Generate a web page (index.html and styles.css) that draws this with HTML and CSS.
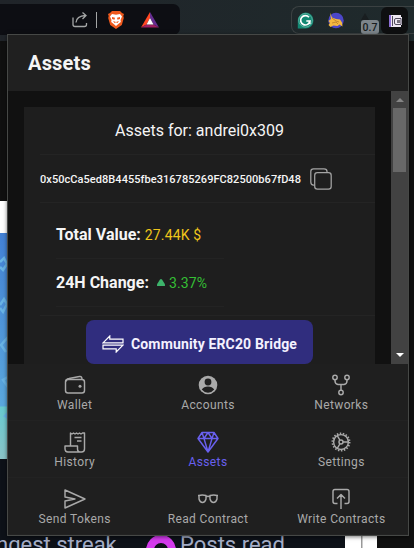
FILE: index.html
```html
<!DOCTYPE html>
<html lang="en">
<head>
<meta charset="utf-8">
<title>Assets</title>
<link rel="stylesheet" href="styles.css">
</head>
<body>
<div class="desktop">
  <header class="toolbar">
    <div class="address">
      <svg class="share" width="18" height="18" viewBox="0 0 18 18" fill="none" stroke="#a4a6a6" stroke-width="1.3"><path d="M2 6.500V13.500Q2 15.500 4 15.500H13.500Q15.500 15.500 15.500 13.500V12M5 11.500Q5.500 5 14.500 4.500M11.500 1.500L15 4.500L11.500 8"/></svg>
      <span class="divider"></span>
      <svg class="brave" width="18" height="20" viewBox="0 0 18 20"><path fill="#ee591d" d="M5 1h8l2 2 2 1-.7 2 .5 2-2 7L9 19l-5.800-4L1.200 8l.5-2L1 4l2-1z"/><path fill="#fff" d="M5 4l4 .7L13 4l2 2.500-1.500 3.500.3 2-2.500 2L9 16l-2.300-2-2.500-2 .3-2L3 6.500z"/><path fill="#ee591d" d="M5 7l3 .8-.5 2L5 9zM13 7l-3 .8.5 2L13 9zM6 11l3 1 3-1-1.500 2-1.500-.7-1.500.7z"/></svg>
      <svg class="bat" width="18" height="16" viewBox="0 0 18 16"><path fill="#ff4724" d="M9 0L0 15.500l5.500-3L9 6z"/><path fill="#662d91" d="M9 0l9 15.500-5.500-3L9 6z"/><path fill="#9e1f63" d="M0 15.500h18l-5.500-3h-7z"/><path fill="#fff" d="M9 6l3.500 6.500h-7z"/></svg>
    </div>
    <div class="extensions">
      <svg class="grammar" width="17" height="17" viewBox="0 0 17 17"><path fill="#128873" d="M8.500.5a8 8 0 1 1 0 16H.8V8.500A8 8 0 0 1 8.500.5z"/><circle cx="8.500" cy="8.300" r="6.800" fill="none" stroke="#8ec8bb" stroke-width=".6"/><path d="M12 5.300A4.700 4.700 0 1 0 13 9H9.300M12.800 9v3" fill="none" stroke="#fff" stroke-width="1.700"/></svg>
      <svg class="fox" width="18" height="17" viewBox="0 0 18 17"><circle cx="9" cy="8.500" r="7.700" fill="#4c46c9"/><path fill="#f4b840" d="M3 .5l2 5 4 1.500 4 .5 2 3 .5 4-3-2-2 1.500-4-.5-3 1.500-2-2 1.500-2-1.500-2 2.500-2z"/><path d="M5 6l4 3 3 1M5 11l4-1 2 2" fill="none" stroke="#af742b" stroke-width=".7"/></svg>
      <span class="gas"><i></i><b>0.7</b></span>
      <span class="active-extension"><svg width="15" height="14" viewBox="0 0 15 14"><path fill="#eee8f2" d="M1 1h12v2h1v8h-1v2H1z"/><path fill="#8c70d4" d="M1 1h2v12H1z"/><path d="M4.500 2v10M13 4.500H8q-1.500 0-1.500 1.500v3q0 1.500 1.500 1.500h5z" fill="none" stroke="#504a5c"/><path d="M9 6h3v3H9z" fill="#77717d"/></svg></span>
    </div>
  </header>
  <div class="banner">
    <svg width="8" height="226" viewBox="0 0 8 226" fill="none" stroke="#69b4e6" stroke-width="2.500"><path d="M0 29l4-4 3 6-4 6-3-3M0 72l4-6 3 5-4 8-3-4M8 104l-7 8 5 7M8 144l-5 3 5 7M8 180l-3 3 3 2"/></svg>
  </div>
  <div class="page-footer"><span class="streak">ngest streak</span><i class="ring"></i><span class="posts">Posts read</span><i class="white-strip"></i></div>

  <main class="popup">
    <h1>Assets</h1>
    <div class="viewport">
      <section class="card">
        <h2>Assets for: andrei0x309</h2>
        <div class="account"><span>0x50cCa5ed8B4455fbe316785269FC82500b67fD48</span>
          <svg width="22" height="22" viewBox="0 0 22 22" fill="none" stroke="#a4a4a4" stroke-width="1.250"><rect x="4.700" y="4.700" width="16.500" height="16.500" rx="2.700"/><path d="M4.700 17H3.500Q.8 17 .8 14V3.500Q.8.800 3.500.8H14Q17 .8 17 3.500v1.200"/></svg>
        </div>
        <div class="stats">
          <div class="stat"><b>Total Value:</b><span class="value">27.44K $</span></div>
          <div class="stat"><b>24H Change:</b><svg width="8" height="7" viewBox="0 0 8 7"><path fill="#3db36b" d="M3 .6q1-1.200 2 0l3 4.600Q8.500 7 7.400 7H.6Q-.5 7 0 5.200z"/></svg><span class="gain">3.37%</span></div>
        </div>
        <div class="bridge-row"><button><svg width="22" height="18" viewBox="0 0 22 18" fill="none" stroke="#fff" stroke-width="1.200"><path d="M1 7.800L7.800 1v3.200H21v3.600zM21 10.200L14.200 17v-3.200H1v-3.600z"/></svg><span>Community ERC20 Bridge</span></button></div>
      </section>
      <div class="scrollbar"><i class="up"></i><i class="thumb"></i><i class="down"></i></div>
    </div>
    <nav>
      <a><svg viewBox="0 0 22 22"><rect x="1.500" y="5.500" width="19" height="13.500" rx="2.500"/><path d="M2 7.500Q2 5 5 4.500L15.500 2.500Q18 2 18 5.500"/><circle class="solid" cx="16" cy="12.200" r="1.500"/></svg><span>Wallet</span></a>
      <a><svg viewBox="0 0 22 22"><circle class="solid" cx="11" cy="11" r="9.300"/><circle class="cut" cx="11" cy="8" r="3.400"/><path class="cut" d="M4.800 15.500q2-3 6.200-3t6.200 3Q14.500 18.800 11 18.800t-6.200-3.300z"/></svg><span>Accounts</span></a>
      <a><svg viewBox="0 0 22 22"><circle cx="5" cy="3.500" r="2.200"/><circle cx="17" cy="3.500" r="2.200"/><circle cx="11" cy="18.500" r="2.200"/><path d="M5 6v1Q5 10 8 10.500H14q3-.5 3-3.500V6M11 10.500v6"/></svg><span>Networks</span></a>
      <a><svg viewBox="0 0 22 22"><path d="M6.500 15V2l1.500 1L9.500 2l1.500 1L12.500 2 14 3l1.500-1L17 3l1.500-1L20.500 2v16q0 3-3 3H4q-3 0-3-3.500V15h12.500v3q0 3 3.500 3M10.500 6.500h7M13 10h4.500"/></svg><span>History</span></a>
      <a class="selected"><svg viewBox="0 0 22 22"><path d="M5 1.500h12l4 6L11 21 1 7.500zM1 7.500h20M5 1.500l2 6 4-6 4 6 2-6M7 7.500L11 21l4-13.500"/></svg><span>Assets</span></a>
      <a><svg viewBox="0 0 22 22"><circle cx="11" cy="11" r="7.400"/><circle class="teeth" cx="11" cy="11" r="8.600"/><circle cx="11" cy="11" r="2"/><path d="M13 11h5M9.800 9L7.300 4.600M9.800 13l-2.500 4.400"/></svg><span>Settings</span></a>
      <a><svg viewBox="0 0 22 22"><path d="M1 2l20 9-20 9V13l10-2L1 9z"/></svg><span>Send Tokens</span></a>
      <a><svg viewBox="0 0 22 22"><path d="M1 7.500h1m18 0h1M2 7.500q3-1 7 0v3.500q-1 3.500-3.500 3.500T2 11zM13 7.500q4-1 7 0v3.500q-1 3.500-3.500 3.500T13 11zM9 9q2-1.500 4 0"/></svg><span>Read Contract</span></a>
      <a><svg viewBox="0 0 22 22"><path d="M7.500 15.500H5q-2 0-2-2V3.500q0-2 2-2h12q2 0 2 2v10q0 2-2 2h-2.500M11 21V7M7 10.500L11 6.500l4 4"/></svg><span>Write Contracts</span></a>
    </nav>
  </main>
</div>
</body>
</html>
```
FILE: styles.css
```css
* { box-sizing: border-box; }
body { margin: 0; font-family: Roboto, sans-serif; color: #f5f5f5; background: #101010; overflow: hidden; }
svg { display: block; flex: none; }
.desktop { position: relative; width: 414px; height: 548px; overflow: hidden; }
.toolbar { height: 41px; background: linear-gradient(90deg, #202429, #1f2a2c); display: flex; justify-content: space-between; }
.address { width: 180px; height: 31px; margin-top: 4px; background: #0d0e13; border-radius: 0 7px 7px 0; display: flex; align-items: center; padding: 0 0 0 71px; }
.divider { width: 1px; height: 16px; margin: 0 10px 0 7px; background: #a4a6a6; }
.bat { margin-left: 16px; }
.extensions { width: 123px; height: 28px; margin-top: 6px; border: 1px solid #3b4142; border-right: 0; border-radius: 8px 0 0 8px; display: flex; padding: 5px 0 0 5px; }
.fox { margin-left: 13px; }
.gas { flex: none; margin: 1px 2px 0 12px; width: 22px; display: flex; flex-direction: column; align-items: flex-end; }
.gas i { align-self: flex-start; margin-left: 4px; border: 4px solid transparent; border-top: 0; border-bottom: 7px solid #191e20; }
.gas b { width: 18px; height: 14px; border-radius: 3px; background: #7d858b; color: #171d21; font: 500 10.500px/15px Roboto; text-align: center; }
.active-extension { flex: none; width: 27px; height: 27px; margin-top: -5px; border-radius: 6px; background: #0e0f10; display: grid; place-items: center; }
.active-extension svg { margin-left: 2px; }
.banner { position: absolute; left: 0; top: 201px; width: 8px; height: 258px; padding-top: 32px; background: linear-gradient(#fff 0 32px, #4381d5 32px, #5ba8de 205px, #68cbd0 206px, #8bc4c8 258px); }
.page-footer { position: absolute; left: 0; top: 459px; width: 377px; height: 89px; background: #0d1118; display: flex; align-items: flex-start; padding-top: 72px; color: #a4adc7; font-size: 22px; line-height: 28px; white-space: nowrap; }
.streak { flex: none; width: 150px; margin-left: -4px; }
.ring { flex: none; width: 30px; height: 30px; margin-top: 4px; border: 8px solid #d43bed; border-radius: 50%; }
.posts { width: 169px; padding-left: 4px; flex: none; }
.white-strip { width: 32px; height: 20px; flex: none; background: linear-gradient(90deg, #fff 0 16px, #999 16px 17px, #fff 18px); }
.popup { position: absolute; left: 7px; top: 34px; width: 402px; height: 502px; border: 1px solid #464846; background: #111; box-shadow: 0 1px 4px #0008; }
h1 { height: 56px; margin: 0; padding-left: 20px; background: #202020; font: 700 20px/56px Roboto; letter-spacing: .2px; }
.viewport { height: 273px; display: flex; justify-content: space-between; padding-left: 16px; overflow: hidden; }
.card { width: 351px; height: 257px; margin-top: 16px; background: #1e1e1e; }
h2 { margin: 0 0 0 16px; height: 48px; border-bottom: 1px solid #242424; padding-right: 16px; text-align: center; font: 400 16px/47px Roboto; }
.account { height: 48px; margin-left: 16px; display: flex; align-items: center; gap: 9px; border-bottom: 1px solid #242424; font-size: 11px; font-weight: 500; letter-spacing: .055px; }
.account span { padding-top: 2px; }
.account svg { margin-top: 1px; }
.stats { height: 113px; margin-left: 16px; padding: 8px 0 0 16px; border-bottom: 1px solid #242424; }
.stat { width: 168px; height: 48px; display: flex; align-items: center; border-bottom: 1px solid #232323; font-size: 16px; }
.stat b { margin-right: 4px; }
.stat svg { margin: 0 4px; }
.value, .gain { font-size: 14px; letter-spacing: .15px; color: #efc51b; padding-top: 1px; }
.gain { color: #35bf35; }
.bridge-row { display: flex; justify-content: center; padding-top: 4px; }
button { width: 227px; height: 44px; border: 0; border-radius: 8px; color: #f4f1ff; background: #302d7e; font: 700 14px Roboto; display: flex; align-items: center; padding: 3px 0 0 16px; gap: 7px; letter-spacing: .15px; white-space: nowrap; }
.scrollbar { width: 17px; background: #424242; display: flex; flex-direction: column; align-items: center; padding-top: 7px; }
.up, .down { border: 4px solid transparent; border-top: 0; border-bottom: 4px solid #858585; }
.thumb { width: 13px; height: 64px; margin-top: 6px; background: #686868; }
.down { margin-top: auto; margin-bottom: 7px; border-top: 4px solid #fff; border-bottom: 0; }
nav { height: 171px; display: grid; grid-template: repeat(3, 57px) / repeat(3, 1fr); background: #1f1f1f; }
nav a { display: flex; flex-direction: column; align-items: center; padding-top: 10px; border-bottom: 1px solid #222; color: #a9a9a9; }
nav svg { width: 22px; height: 22px; fill: none; stroke: currentColor; stroke-width: 1.450; stroke-linejoin: round; }
nav .solid { fill: currentColor; stroke: none; }
nav .cut { fill: #1f1f1f; stroke: none; }
nav .teeth { stroke-width: 1.800; stroke-dasharray: 1.500 1.502; }
nav span { margin-top: 2px; font-size: 12px; line-height: 14px; letter-spacing: .37px; white-space: nowrap; }
nav .selected { color: #6960ee; }
```
